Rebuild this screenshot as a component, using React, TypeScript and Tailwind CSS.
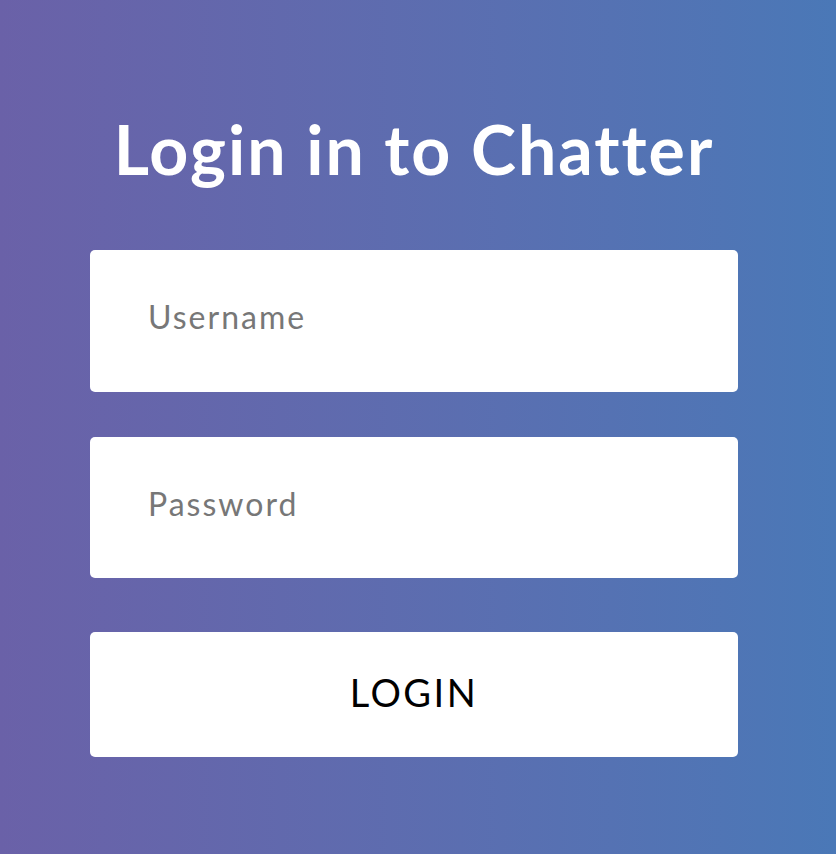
export default function App() {
  return (
    <div
      className="w-[836px] h-[854px] bg-gradient-to-r from-[#6a61a8] to-[#4a78b7] flex flex-col items-center pt-[107px] pr-[8px]"
      style={{ fontFamily: "Lato, 'Noto Sans', sans-serif" }}
    >
      <h1 className="text-white font-bold text-[68px] leading-[84px] tracking-[2px]">
        Login in to Chatter
      </h1>

      <form className="w-[648px] flex flex-col mt-[59px]">
        <input
          type="text"
          placeholder="Username"
          className="h-[142px] bg-white rounded-[5px] pl-[58px] pb-[9px] text-[32px] text-[#222] placeholder:text-[#777] outline-none tracking-[2px]"
        />
        <input
          type="password"
          placeholder="Password"
          className="h-[141px] mt-[45px] bg-white rounded-[5px] pl-[58px] pb-[9px] text-[32px] text-[#222] placeholder:text-[#777] outline-none tracking-[2px]"
        />
        <button
          type="button"
          className="h-[125px] mt-[54px] bg-white rounded-[5px] pb-[4px] text-[38px] text-black tracking-[2.5px]"
        >
          LOGIN
        </button>
      </form>
    </div>
  );
}
